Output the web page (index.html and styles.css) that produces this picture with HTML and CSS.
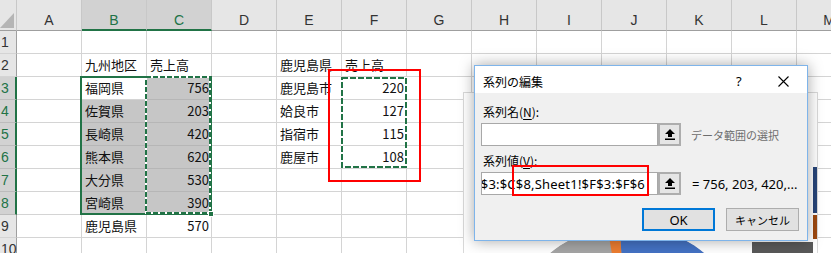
FILE: index.html
```html
<!DOCTYPE html>
<html lang="ja">
<head>
<meta charset="utf-8">
<title>系列の編集</title>
<link rel="stylesheet" href="styles.css">
</head>
<body>
<div class="app">
  <div class="sheet">
    <div class="row head">
      <div class="corner"><svg width="14" height="15" viewBox="0 0 14 15"><polygon points="14,0 14,15 0,15" fill="#b5b5b5"/></svg></div>
      <div class="ch">A</div><div class="ch hs">B</div><div class="ch hs">C</div><div class="ch">D</div><div class="ch">E</div><div class="ch">F</div><div class="ch">G</div><div class="ch">H</div><div class="ch">I</div><div class="ch">J</div><div class="ch">K</div><div class="ch">L</div><div class="ch">M</div>
    </div>
    <div class="row">
      <div class="rh">1</div>
      <div class="c"></div><div class="c"></div><div class="c"></div><div class="c"></div><div class="c"></div><div class="c"></div><div class="c"></div><div class="c"></div><div class="c"></div><div class="c"></div><div class="c"></div><div class="c"></div><div class="c"></div>
    </div>
    <div class="row">
      <div class="rh">2</div>
      <div class="c"></div><div class="c">九州地区</div><div class="c">売上高</div><div class="c"></div><div class="c">鹿児島県</div><div class="c">売上高</div><div class="c"></div><div class="c"></div><div class="c"></div><div class="c"></div><div class="c"></div><div class="c"></div><div class="c"></div>
    </div>
    <div class="row">
      <div class="rh rhs">3</div>
      <div class="c"></div><div class="c act">福岡県</div><div class="c sel num">756</div><div class="c"></div><div class="c">鹿児島市</div><div class="c num">220</div><div class="c"></div><div class="c"></div><div class="c"></div><div class="c"></div><div class="c"></div><div class="c"></div><div class="c"></div>
    </div>
    <div class="row">
      <div class="rh rhs">4</div>
      <div class="c"></div><div class="c sel">佐賀県</div><div class="c sel num">203</div><div class="c"></div><div class="c">姶良市</div><div class="c num">127</div><div class="c"></div><div class="c"></div><div class="c"></div><div class="c"></div><div class="c"></div><div class="c"></div><div class="c"></div>
    </div>
    <div class="row">
      <div class="rh rhs">5</div>
      <div class="c"></div><div class="c sel">長崎県</div><div class="c sel num">420</div><div class="c"></div><div class="c">指宿市</div><div class="c num">115</div><div class="c"></div><div class="c"></div><div class="c"></div><div class="c"></div><div class="c"></div><div class="c"></div><div class="c"></div>
    </div>
    <div class="row">
      <div class="rh rhs">6</div>
      <div class="c"></div><div class="c sel">熊本県</div><div class="c sel num">620</div><div class="c"></div><div class="c">鹿屋市</div><div class="c num">108</div><div class="c"></div><div class="c"></div><div class="c"></div><div class="c"></div><div class="c"></div><div class="c"></div><div class="c"></div>
    </div>
    <div class="row">
      <div class="rh rhs">7</div>
      <div class="c"></div><div class="c sel">大分県</div><div class="c sel num">530</div><div class="c"></div><div class="c"></div><div class="c"></div><div class="c"></div><div class="c"></div><div class="c"></div><div class="c"></div><div class="c"></div><div class="c"></div><div class="c"></div>
    </div>
    <div class="row">
      <div class="rh rhs">8</div>
      <div class="c"></div><div class="c sel">宮崎県</div><div class="c sel num">390</div><div class="c"></div><div class="c"></div><div class="c"></div><div class="c"></div><div class="c"></div><div class="c"></div><div class="c"></div><div class="c"></div><div class="c"></div><div class="c"></div>
    </div>
    <div class="row">
      <div class="rh">9</div>
      <div class="c"></div><div class="c">鹿児島県</div><div class="c num">570</div><div class="c"></div><div class="c"></div><div class="c"></div><div class="c"></div><div class="c"></div><div class="c"></div><div class="c"></div><div class="c"></div><div class="c"></div><div class="c"></div>
    </div>
    <div class="row">
      <div class="rh">10</div>
      <div class="c"></div><div class="c"></div><div class="c"></div><div class="c"></div><div class="c"></div><div class="c"></div><div class="c"></div><div class="c"></div><div class="c"></div><div class="c"></div><div class="c"></div><div class="c"></div><div class="c"></div>
    </div>
  </div>

  <svg class="marks" width="831" height="253" viewBox="0 0 831 253">
    <rect x="81" y="77" width="130" height="137" fill="none" stroke="#217346" stroke-width="2"/>
    <rect x="146" y="77" width="64" height="136" fill="none" stroke="#ffffff" stroke-width="2"/>
    <rect x="146" y="77" width="64" height="136" fill="none" stroke="#217346" stroke-width="2" stroke-dasharray="5 2"/>
    <rect x="208.5" y="211.5" width="5" height="5" fill="#217346" stroke="#ffffff" stroke-width="1"/>
    <rect x="342" y="78" width="64" height="89" fill="none" stroke="#ffffff" stroke-width="2"/>
    <rect x="342" y="78" width="64" height="89" fill="none" stroke="#217346" stroke-width="2" stroke-dasharray="6 2"/>
    <rect x="329" y="70" width="91" height="111" fill="none" stroke="#ff0000" stroke-width="2"/>
  </svg>

  <div class="chart">
    <svg width="353" height="168" viewBox="0 0 353 168">
      <defs><clipPath id="pie"><circle cx="627" cy="345" r="120"/></clipPath></defs>
      <g transform="translate(-464,-93)">
        <g clip-path="url(#pie)">
          <circle cx="627" cy="345" r="120" fill="#a5a5a5"/>
          <polygon points="618,200 780,200 780,420 627,345" fill="#4472c4"/>
          <polygon points="603,200 618,200 627,345" fill="#ed7d31"/>
        </g>
        <rect x="752" y="242" width="61" height="12" fill="#595959"/>
        <rect x="813" y="167" width="4" height="46" fill="#264478"/>
        <rect x="813" y="215" width="4" height="24" fill="#9e480e"/>
      </g>
    </svg>
  </div>

  <div class="dialog">
    <div class="dtitle">
      <span class="ttext">系列の編集</span>
      <span class="help">?</span>
      <span class="close"><svg width="11" height="11" viewBox="0 0 11 11"><path d="M0.5 0.5 L10.5 10.5 M10.5 0.5 L0.5 10.5" stroke="#000" stroke-width="1.1" fill="none"/></svg></span>
    </div>
    <div class="dbody">
      <div class="lbl">系列名(<u>N</u>):</div>
      <div class="field">
        <div class="inp"></div>
        <div class="pick"><svg width="10" height="11" viewBox="0 0 10 11"><path d="M5 0 L10 5 H7 V8 H3 V5 H0 Z" fill="#000"/><rect x="0" y="9.5" width="10" height="1.5" fill="#000"/></svg></div>
        <span class="hint">データ範囲の選択</span>
      </div>
      <div class="lbl lbl2">系列値(<u>V</u>):</div>
      <div class="field">
        <div class="inp"><span class="val">=Sheet1!$C$3:$C$8,Sheet1!$F$3:$F$6</span></div>
        <div class="pick"><svg width="10" height="11" viewBox="0 0 10 11"><path d="M5 0 L10 5 H7 V8 H3 V5 H0 Z" fill="#000"/><rect x="0" y="9.5" width="10" height="1.5" fill="#000"/></svg></div>
        <span class="result">= 756, 203, 420,...</span>
      </div>
      <div class="buttons">
        <div class="btn ok">OK</div>
        <div class="btn">キャンセル</div>
      </div>
    </div>
  </div>

  <div class="callout"></div>
</div>
</body>
</html>
```

FILE: styles.css
```css
* { box-sizing: border-box; }
body {
  margin: 0;
  background: #ffffff;
  font-family: "Noto Sans CJK JP", "Noto Sans", sans-serif;
}
.app {
  position: relative;
  width: 831px;
  height: 253px;
  overflow: hidden;
  background: #ffffff;
}
.sheet { width: 862px; }
.row {
  display: grid;
  grid-template-columns: 17px repeat(13, 65px);
  height: 23px;
}
.row.head { height: 31px; }

.corner {
  background: #e6e6e6;
  border-right: 1px solid #c8c8c8;
  border-bottom: 1px solid #9f9f9f;
  display: flex;
  align-items: flex-end;
  justify-content: flex-end;
  padding: 0 2px 2px 0;
}
.corner svg { display: block; }

.ch {
  background: #e6e6e6;
  border-right: 1px solid #c8c8c8;
  border-bottom: 1px solid #9f9f9f;
  font-family: "Liberation Sans", Arial, sans-serif;
  font-size: 14px;
  line-height: 16px;
  color: #333;
  display: flex;
  align-items: flex-end;
  justify-content: center;
  padding-bottom: 2px;
}
.ch.hs {
  background: #d2d2d2;
  color: #217346;
  border-bottom: 2px solid #217346;
  padding-bottom: 1px;
}

.rh {
  background: #e6e6e6;
  border-right: 1px solid #9f9f9f;
  border-bottom: 1px solid #d4d4d4;
  font-family: "Liberation Sans", Arial, sans-serif;
  font-size: 14px;
  line-height: 22px;
  color: #333;
  padding-left: 1px;
  white-space: nowrap;
}
.rh.rhs {
  background: #d2d2d2;
  color: #217346;
  border-right: 2px solid #217346;
  border-bottom-color: #bcbcbc;
}

.c {
  border-right: 1px solid #d4d4d4;
  border-bottom: 1px solid #d4d4d4;
  font-size: 13px;
  line-height: 22px;
  padding: 0 2px 0 3px;
  white-space: nowrap;
  color: #111;
}
.c.num { text-align: right; padding-right: 2px; }
.c.sel {
  background: #c6c6c6;
  border-color: #b6b6b6;
}
.c.act { background: #ffffff; }

.marks {
  position: absolute;
  left: 0;
  top: 0;
  pointer-events: none;
}

.chart {
  position: absolute;
  left: 463px;
  top: 92px;
  width: 355px;
  height: 170px;
  background: #ffffff;
  border: 1px solid #d9d9d9;
}
.chart svg { display: block; }

.dialog {
  position: absolute;
  left: 474px;
  top: 65px;
  width: 334px;
  height: 176px;
  background: #f0f0f0;
  border: 1px solid #7eb4ea;
  box-shadow: 0 0 14px rgba(0, 0, 0, 0.35);
  font-size: 12px;
  color: #000;
}
.dtitle {
  height: 27px;
  background: #ffffff;
  display: flex;
  align-items: center;
  padding: 3px 0 0 8px;
}
.ttext { flex: 1; }
.help {
  font-family: "Noto Sans", sans-serif;
  font-size: 13px;
  width: 42px;
}
.close {
  width: 29px;
  display: flex;
  padding-top: 1px;
}
.close svg { display: block; }

.dbody { padding: 11px 7px 0 6px; }
.lbl {
  margin-left: 2px;
  height: 16px;
  line-height: 16px;
}
.lbl u { text-underline-offset: 2px; }
.lbl2 { margin-top: 7px; }
.field {
  display: flex;
  align-items: center;
  height: 23px;
  margin-top: 3px;
}
.inp {
  width: 177px;
  height: 23px;
  background: #ffffff;
  border: 1px solid #a8a8a8;
  display: flex;
  align-items: center;
  justify-content: flex-end;
  overflow: hidden;
  white-space: nowrap;
  padding-right: 12px;
  font-family: "Noto Sans", sans-serif;
  font-size: 13px;
}
.val { flex-shrink: 0; letter-spacing: 0.2px; }
.pick {
  width: 23px;
  height: 23px;
  border: 2px solid #adadad;
  background: #e5e5e5;
  display: flex;
  align-items: center;
  justify-content: center;
}
.pick svg { display: block; }
.hint {
  margin-left: 10px;
  color: #6d6d6d;
  font-size: 11px;
}
.result {
  margin-left: 11px;
  font-family: "Noto Sans", sans-serif;
  font-size: 13px;
}
.buttons {
  display: flex;
  justify-content: flex-end;
  gap: 11px;
  margin-top: 13px;
  padding-right: 1px;
}
.btn {
  width: 73px;
  height: 23px;
  border: 1px solid #adadad;
  background: #e1e1e1;
  display: flex;
  align-items: center;
  justify-content: center;
  font-size: 11px;
}
.btn.ok {
  border: 2px solid #0078d7;
  font-family: "Noto Sans", sans-serif;
  font-size: 13px;
}

.callout {
  position: absolute;
  left: 512px;
  top: 165px;
  width: 137px;
  height: 31px;
  border: 2px solid #ff0000;
}
```
